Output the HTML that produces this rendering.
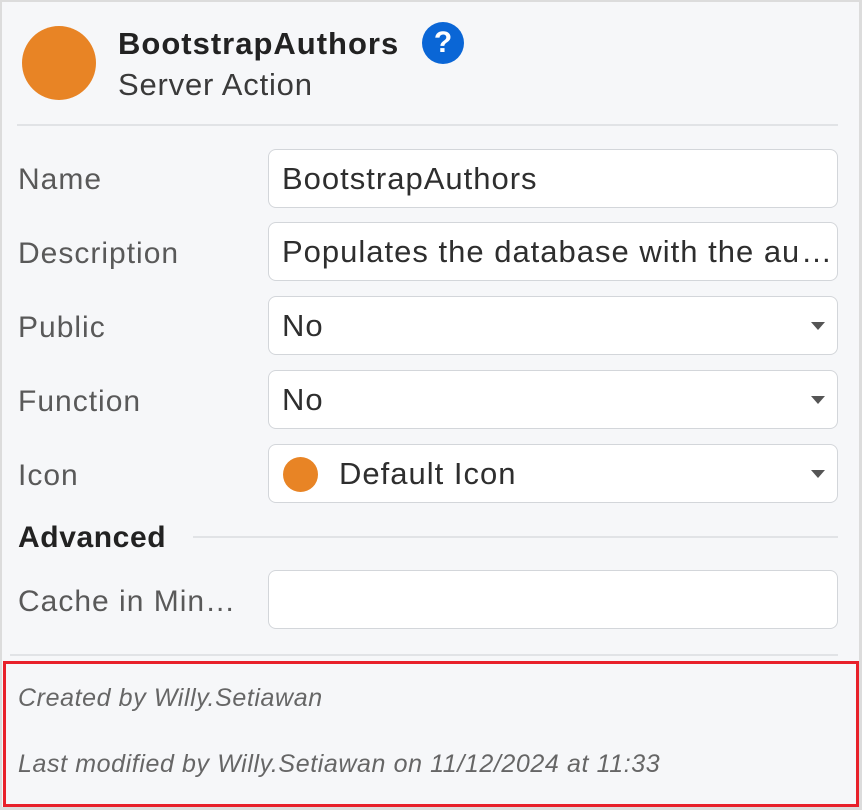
<!DOCTYPE html>
<html><head><style>
*{box-sizing:border-box;margin:0;padding:0}
body{width:862px;height:810px;background:#dcdcdc;font-family:"Liberation Sans",sans-serif;position:relative;overflow:hidden}
.panel{position:absolute;left:2px;top:2px;width:857px;height:805px;background:#f6f7f9}
.a{position:absolute}
.lbl{position:absolute;left:18px;font-size:30px;letter-spacing:1px;color:#595959;}
.inp{position:absolute;left:268px;width:570px;height:59px;background:#fff;border:1.5px solid #d3d6da;border-radius:8px;font-size:31px;letter-spacing:1px;color:#2e2e2e;padding-left:13px;line-height:58px;white-space:nowrap;overflow:hidden}
.car{position:absolute;right:12px;top:25px;width:0;height:0;border-left:7px solid transparent;border-right:7px solid transparent;border-top:8px solid #555}
</style></head><body>
<div class="panel"></div>
<div class="a" style="left:22px;top:26px;width:74px;height:74px;border-radius:50%;background:#e88425"></div>
<div class="a" style="left:118px;top:26px;font-size:31px;letter-spacing:1px;font-weight:bold;color:#222">BootstrapAuthors</div>
<div class="a" style="left:422px;top:22px;width:42px;height:42px;border-radius:50%;background:#0a66d6;color:#fff;font-weight:bold;font-size:30px;text-align:center;line-height:42px">?</div>
<div class="a" style="left:118px;top:67px;font-size:31px;letter-spacing:0.8px;color:#3a3a3a">Server Action</div>
<div class="a" style="left:17px;top:124px;width:821px;height:2px;background:#e1e3e6"></div>

<div class="lbl" style="top:163px">Name</div>
<div class="inp" style="top:149px">BootstrapAuthors</div>
<div class="lbl" style="top:237px">Description</div>
<div class="inp" style="top:222px;padding-right:40px">Populates the database with the au<span style="position:absolute;right:6px;top:0;width:34px;background:#fff;padding-left:4px">…</span></div>
<div class="lbl" style="top:311px">Public</div>
<div class="inp" style="top:296px">No<div class="car"></div></div>
<div class="lbl" style="top:385px">Function</div>
<div class="inp" style="top:370px">No<div class="car"></div></div>
<div class="lbl" style="top:459px">Icon</div>
<div class="inp" style="top:444px;padding-left:70px">Default Icon<div class="a" style="left:14px;top:12px;width:35px;height:35px;border-radius:50%;background:#e88425"></div><div class="car"></div></div>

<div class="a" style="left:18px;top:521px;font-size:30px;letter-spacing:0.6px;font-weight:bold;color:#222">Advanced</div>
<div class="a" style="left:193px;top:536px;width:645px;height:2px;background:#e1e3e6"></div>
<div class="lbl" style="top:585px">Cache in Min…</div>
<div class="inp" style="top:570px"></div>
<div class="a" style="left:10px;top:654px;width:828px;height:2px;background:#e1e3e6"></div>

<div class="a" style="left:3px;top:661px;width:856px;height:146px;border:3px solid #e8202a"></div>
<div class="a" style="left:18px;top:684px;font-size:25px;letter-spacing:0.6px;font-style:italic;color:#666">Created by Willy.Setiawan</div>
<div class="a" style="left:18px;top:750px;font-size:25px;letter-spacing:0.6px;font-style:italic;color:#666">Last modified by Willy.Setiawan on 11/12/2024 at 11:33</div>
</body></html>
